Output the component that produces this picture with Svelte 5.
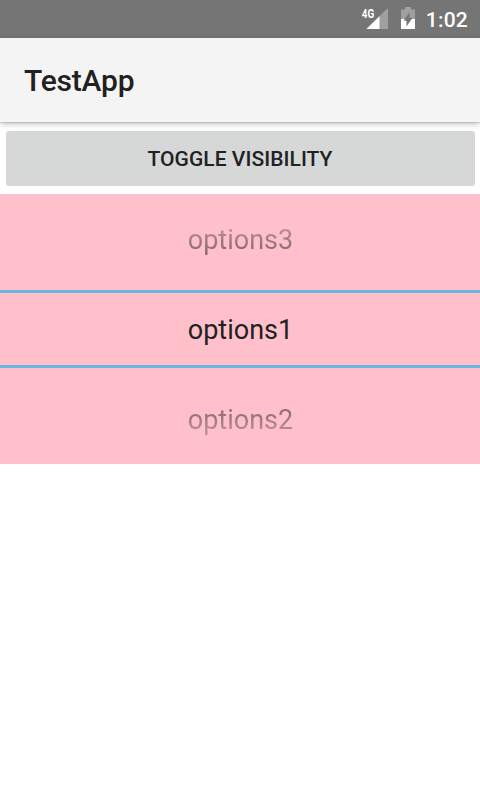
<script>
  let visible = $state(true);
  let selected = $state(0);
  const options = ['options1', 'options2', 'options3'];
  const previous = $derived((selected + options.length - 1) % options.length);
  const next = $derived((selected + 1) % options.length);
</script>

<main class="screen">
  <header class="status">
    <svg class="signal" width="28" height="24" viewBox="0 0 28 24">
      <path d="M6 23 28 2V23Z" fill="#a0a0a0" />
      <path d="M6.5 23 19.5 10.2V23Z" fill="#fff" />
      <text x="1.8" y="11.6" textLength="12.4" lengthAdjust="spacingAndGlyphs">4G</text>
    </svg>
    <svg class="battery" width="14" height="24" viewBox="0 0 14 24">
      <path d="M4 1H10V3.5H14V13H0V3.5H4Z" fill="#a0a0a0" />
      <path d="M0 13H14V23H0Z" fill="#fff" />
      <path d="M8.5 6V11.8H11.5L5.5 20.5V14.7H2.7Z" fill="#757575" />
    </svg>
    <span class="clock">1:02</span>
  </header>
  <div class="toolbar"><h1>TestApp</h1></div>
  <section class="content">
    <button class="toggle" onclick={() => (visible = !visible)}>TOGGLE VISIBILITY</button>
    {#if visible}
      <div class="picker">
        <button class="option above" onclick={() => (selected = previous)}><span>{options[previous]}</span></button>
        <div class="option current"><span>{options[selected]}</span></div>
        <button class="option below" onclick={() => (selected = next)}><span>{options[next]}</span></button>
      </div>
    {/if}
  </section>
</main>

<style>
  :global(body) { margin: 0; background: #fff; }
  .screen {
    display: flex;
    flex-direction: column;
    width: 480px;
    height: 800px;
    overflow: hidden;
    background: #fff;
    font-family: Roboto, "Liberation Sans", sans-serif;
    color: #212121;
  }
  .status {
    display: flex;
    align-items: center;
    justify-content: flex-end;
    box-sizing: border-box;
    flex: none;
    height: 38px;
    padding-right: 12px;
    background: #757575;
    color: #fff;
  }
  .signal { margin: 0 13px 2px 0; }
  .signal text { font-size: 12px; font-weight: 700; fill: #fff; }
  .battery { margin: 0 11px 2px 0; }
  .clock { font-size: 21px; font-weight: 500; line-height: 38px; padding-top: 2px; letter-spacing: 0.2px; }
  .toolbar {
    display: flex;
    align-items: center;
    box-sizing: border-box;
    flex: none;
    height: 84px;
    padding: 1px 24px 0;
    background: #f4f4f4;
    box-shadow: 0 1px 1px #00000018, 0 2px 6px #00000040;
  }
  h1 { margin: 0; font-size: 30px; font-weight: 500; line-height: 36px; letter-spacing: -0.2px; }
  .content { display: flex; flex-direction: column; padding-top: 9px; }
  button { border: 0; padding: 0; font-family: inherit; color: inherit; }
  .toggle {
    height: 55px;
    margin: 0 5.5px 8px;
    padding-top: 2px;
    border-radius: 3px;
    background: #d6d7d7;
    font-size: 21px;
    font-weight: 500;
    line-height: 53px;
    letter-spacing: 0.05px;
  }
  .picker { display: flex; flex-direction: column; height: 270px; background: #ffc0cb; }
  .option {
    display: flex;
    align-items: center;
    justify-content: center;
    box-sizing: border-box;
    padding-left: 1px;
    background: none;
    font-size: 27px;
    line-height: 32px;
  }
  .above, .below { height: 96px; }
  .above { padding-bottom: 4px; }
  .below { padding-top: 8px; }
  .above span, .below span { color: transparent; background-clip: text; }
  .above span { background-image: linear-gradient(#bd8f97 4px, #89686e 28px); }
  .below span { background-image: linear-gradient(#89686e 4px, #bd8f97 28px); }
  .current { height: 78px; padding-top: 2px; border: solid #69b6de; border-width: 3px 0; }
</style>
